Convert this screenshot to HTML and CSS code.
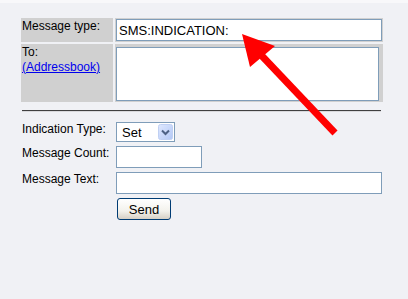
FILE: index.html
```html
<!DOCTYPE html>
<html lang="en">
<head>
    <meta charset="UTF-8">
    <title>Send indication</title>
    <link rel="stylesheet" href="styles.css">
</head>
<body>
    <div class="page">
        <table class="head-table">
            <tr class="row-type">
                <td class="label-cell">Message type:</td>
                <td class="field-cell"><input type="text" class="type-input" value="SMS:INDICATION:"></td>
            </tr>
            <tr class="row-to">
                <td class="label-cell">To:<br><a href="#">(Addressbook)</a></td>
                <td class="field-cell"><textarea class="to-input"></textarea></td>
            </tr>
        </table>

        <hr class="divider">

        <form class="ind-form">
            <label class="form-label">Indication Type:</label>
            <div class="select-wrap">
                <select class="ind-select">
                    <option>Set</option>
                    <option>Clear</option>
                </select>
                <!-- xp style dropdown button -->
                <svg class="select-btn" width="15" height="16" viewBox="0 0 15 16">
                    <defs>
                        <linearGradient id="btnGrad" x1="0" y1="0" x2="1" y2="1">
                            <stop offset="0" stop-color="#dfe8fe"/>
                            <stop offset="1" stop-color="#b3c8f6"/>
                        </linearGradient>
                    </defs>
                    <rect x="0.5" y="0.5" width="14" height="15" rx="2" fill="url(#btnGrad)" stroke="#c0d0f3"/>
                    <path d="M4 6.5 L7.5 10 L11 6.5" fill="none" stroke="#4d6185" stroke-width="2"/>
                </svg>
            </div>

            <label class="form-label">Message Count:</label>
            <div><input type="text" class="count-input"></div>

            <label class="form-label">Message Text:</label>
            <div><input type="text" class="text-input"></div>

            <span></span>
            <div><button type="button" class="send-btn">Send</button></div>
        </form>
    </div>

    <svg class="arrow" width="408" height="299" viewBox="0 0 408 299">
        <line x1="262" y1="56" x2="335" y2="133" stroke="#ff0000" stroke-width="7"/>
        <polygon points="242,34 275,46 250,67" fill="#ff0000"/>
    </svg>
</body>
</html>
```

FILE: styles.css
```css
body {
    margin: 0;
    background-color: #f0f1f5;
    border-top: 3px solid #f8f8fa;
    font-family: "Liberation Sans", Arial, sans-serif;
    font-size: 12px;
    color: #000;
    position: relative;
    min-height: 296px;
}

.page {
    padding: 13px 0 0 19px;
}

/* Top table */
.head-table {
    border-spacing: 2px;
    width: 366px;
}

.head-table td {
    padding: 1px;
    vertical-align: top;
    background-color: #d0d0d0;
}

.label-cell {
    width: 90px;
    line-height: 15px;
}

.row-type td {
    height: 21px;
}

.row-to td {
    height: 56px;
}

.label-cell a {
    color: #0000ee;
}

input,
textarea,
select {
    font-family: "Liberation Sans", Arial, sans-serif;
    font-size: 13px;
    border: 1px solid #7f9db9;
    background-color: #fff;
    margin: 0;
    box-sizing: border-box;
    display: block;
    outline: none;
}

.type-input {
    width: 266px;
    height: 22px;
    padding: 1px 2px;
}

.to-input {
    width: 263px;
    height: 54px;
    margin-top: 2px;
    resize: none;
}

.divider {
    margin: 6px 0 0 3px;
    width: 359px;
    border: none;
    border-top: 1px solid #404040;
    border-bottom: 1px solid #d9d9dc;
    height: 0;
}

/* Indication form */
.ind-form {
    display: grid;
    grid-template-columns: 94px auto;
    grid-template-rows: 20px 22px 22px 22px;
    row-gap: 4px;
    margin: 10px 0 0 3px;
}

.form-label {
    line-height: 14px;
    padding-top: 0;
}

.select-wrap {
    position: relative;
    width: 59px;
    height: 20px;
}

.ind-select {
    appearance: none;
    -webkit-appearance: none;
    width: 59px;
    height: 20px;
    padding: 0 0 0 5px;
    border-radius: 0;
}

.select-btn {
    position: absolute;
    top: 2px;
    right: 2px;
    pointer-events: none;
}

.count-input {
    width: 86px;
    height: 22px;
}

.text-input {
    width: 266px;
    height: 22px;
}

.send-btn {
    width: 54px;
    height: 22px;
    margin-left: 1px;
    font-family: "Liberation Sans", Arial, sans-serif;
    font-size: 13px;
    color: #000;
    border: 1px solid #003c74;
    border-radius: 3px;
    background: linear-gradient(#ffffff, #f3f2ec 60%, #d6d0c5);
    padding: 0;
}

.arrow {
    position: absolute;
    top: -3px;
    left: 0;
    pointer-events: none;
}
```
